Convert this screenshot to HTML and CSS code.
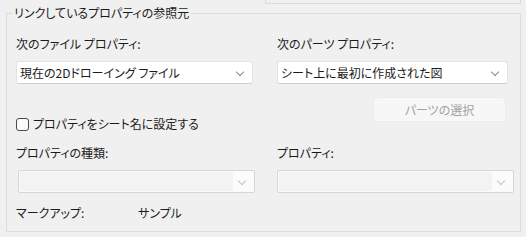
FILE: index.html
```html
<!DOCTYPE html>
<html lang="ja">
<head>
  <meta charset="UTF-8" />
  <title>リンクしているプロパティの参照元</title>
  <link rel="stylesheet" href="styles.css">
</head>
<body>

<!-- upper group (only its bottom edge shows) -->
<div class="top-box"></div>

<!-- LINKED PROPERTY SOURCE -->
<div class="group">
  <div class="group-title">リンクしているプロパティの参照元</div>

  <div class="form-grid">
    <div class="lbl">次のファイル プロパティ:</div>
    <div class="lbl">次のパーツ プロパティ:</div>

    <div class="combo combo-file">
      <span class="combo-text">現在の2Dドローイング ファイル</span>
      <span class="chev"></span>
    </div>
    <div class="combo combo-part">
      <span class="combo-text">シート上に最初に作成された図</span>
      <span class="chev"></span>
    </div>

    <label class="check-row">
      <span class="check-box"></span>
      <span>プロパティをシート名に設定する</span>
    </label>
    <button class="btn-select" disabled>パーツの選択</button>

    <div class="lbl lbl-second">プロパティの種類:</div>
    <div class="lbl lbl-second">プロパティ:</div>

    <div class="combo combo-off combo-kind">
      <span class="combo-fill"></span>
      <span class="chev"></span>
    </div>
    <div class="combo combo-off combo-prop">
      <span class="combo-fill"></span>
      <span class="chev"></span>
    </div>

    <div class="markup-row">
      <span class="markup-key">マークアップ:</span>
      <span>サンプル</span>
    </div>
  </div>
</div>

</body>
</html>
```

FILE: styles.css
```css
* { box-sizing: border-box; }
body, html {
  margin: 0; padding: 0;
  background: #f0f0f0;
  color: #1b1b1b;
  font-family: 'Noto Sans CJK JP', 'Noto Sans', sans-serif;
  font-size: 12px;
  line-height: 16px;
  font-feature-settings: "palt";
  overflow: hidden;
}
.top-box {
  margin-left: 265px; width: 256px; height: 4px;
  border: 1px solid #dcdcdc; border-top: none;
}
.group {
  position: relative;
  margin: 9px 0 0 6px; width: 515px; height: 219px;
  border: 1px solid #dcdcdc;
  padding: 22px 0 0 9px;
}
.group-title {
  position: absolute; top: -9px; left: 5px;
  padding: 0 2px; background: #f0f0f0;
}
.form-grid {
  display: grid;
  grid-template-columns: 261px 1fr;
  align-items: start;
}
.lbl { white-space: nowrap; }
.lbl-second { margin-top: 13px; }

.combo {
  position: relative;
  margin-top: 9px; height: 23px;
  background: #fff;
  border: 1px solid #e3e3e3;
  border-bottom-color: #cfcfcf;
  border-radius: 3px;
  display: flex; align-items: center;
}
.combo-file { width: 237px; }
.combo-part { width: 231px; }
.combo-text { padding-left: 3px; white-space: nowrap; }
.chev {
  position: absolute; right: 9px; top: 7px;
  width: 6px; height: 6px;
  border-right: 1px solid #8a8a8a; border-bottom: 1px solid #8a8a8a;
  transform: rotate(45deg);
}
.combo-off {
  border: 1px solid #d6d6d6; border-radius: 2px;
  padding: 1px; background: #fbfbfb;
}
.combo-off .combo-fill { height: 100%; flex: 1; background: #f3f3f3; margin-right: 20px; }
.combo-off .chev { border-color: #c4c4c4; }
.combo-kind { width: 237px; margin-left: 2px; }
.combo-prop { width: 237px; }

.check-row {
  margin-top: 32px;
  display: flex; align-items: center; gap: 4px;
  white-space: nowrap;
}
.check-box {
  width: 13px; height: 13px;
  border: 1px solid #4a4a4a; border-radius: 3px;
  background: #fbfbfb;
}
.btn-select {
  margin: 13px 0 0 96px; width: 133px; height: 25px;
  font: inherit; line-height: 16px;
  color: #a2a2a2;
  background: #f7f7f7;
  border: 1px solid #ececec; border-radius: 4px;
  padding: 0;
}
.markup-row {
  grid-column: 1 / 3;
  margin-top: 12px;
  display: flex;
}
.markup-key { width: 122px; }
```
